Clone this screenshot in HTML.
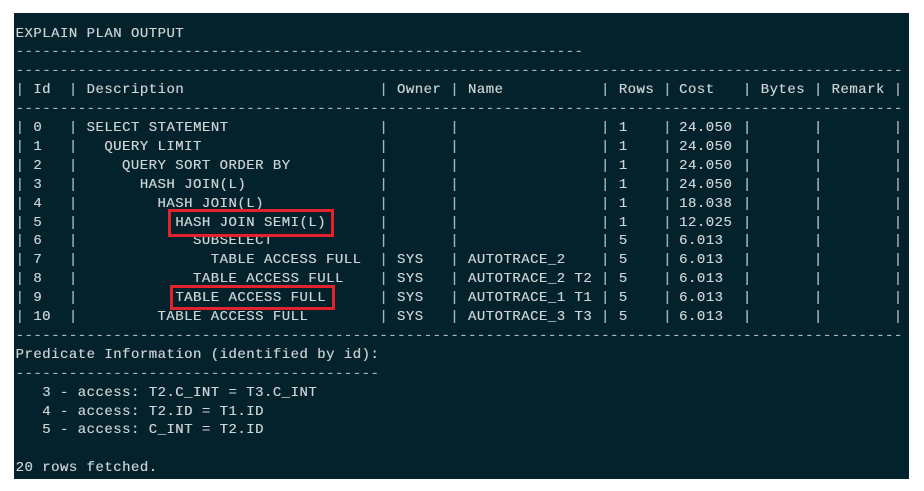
<!DOCTYPE html>
<html><head><meta charset="utf-8"><style>
html,body{margin:0;padding:0;background:#fff;width:924px;height:491px;overflow:hidden}
#p{position:absolute;left:14px;top:13px;width:895px;height:466px;background:#03222c}
.l{position:absolute;left:0;height:19px;line-height:19px;width:924px;font-family:"Liberation Mono",monospace;font-size:14px;letter-spacing:0.47px;color:#cdd4d5;white-space:pre;text-shadow:0.4px 0 0 rgba(205,212,213,0.6)}
.l span{position:absolute;top:0}
.c0{left:15.5px}.c2{left:33.2px}.c6{left:68.7px}.c8{left:86.5px}.c10{left:104.2px}.c12{left:121.9px}.c14{left:139.7px}.c16{left:157.4px}.c18{left:175.2px}.c20{left:192.9px}.c22{left:210.6px}
.c41{left:379.2px}.c43{left:396.9px}.c49{left:450.1px}.c51{left:467.9px}.c66{left:600.9px}.c68{left:618.7px}.c73{left:663px}.c75{left:679px}.c82{left:742.8px}.c84{left:760.6px}.c90{left:813.8px}.c92{left:831.5px}.c99{left:893.6px}
.b{color:#aab4b6}
.box{position:absolute;border:3px solid #e3222b;box-sizing:border-box}
</style></head><body>
<div id="p"></div>
<div class="l" style="top:24.5px"><span class="c0">EXPLAIN PLAN OUTPUT</span></div>
<div class="l" style="top:43.4px"><span class="c0 b">----------------------------------------------------------------</span></div>
<div class="l" style="top:62.3px"><span class="c0 b">----------------------------------------------------------------------------------------------------</span></div>
<div class="l" style="top:81.2px"><span class="c0 b">|</span><span class="c2">Id</span><span class="c6 b">|</span><span class="c8">Description</span><span class="c41 b">|</span><span class="c43">Owner</span><span class="c49 b">|</span><span class="c51">Name</span><span class="c66 b">|</span><span class="c68">Rows</span><span class="c73 b">|</span><span class="c75">Cost</span><span class="c82 b">|</span><span class="c84">Bytes</span><span class="c90 b">|</span><span class="c92">Remark</span><span class="c99 b">|</span></div>
<div class="l" style="top:100.1px"><span class="c0 b">----------------------------------------------------------------------------------------------------</span></div>

<div class="l" style="top:119px"><span class="c0 b">|</span><span class="c2">0</span><span class="c6 b">|</span><span class="c8">SELECT STATEMENT</span><span class="c41 b">|</span><span class="c49 b">|</span><span class="c66 b">|</span><span class="c68">1</span><span class="c73 b">|</span><span class="c75">24.050</span><span class="c82 b">|</span><span class="c90 b">|</span><span class="c99 b">|</span></div>
<div class="l" style="top:137.9px"><span class="c0 b">|</span><span class="c2">1</span><span class="c6 b">|</span><span class="c10">QUERY LIMIT</span><span class="c41 b">|</span><span class="c49 b">|</span><span class="c66 b">|</span><span class="c68">1</span><span class="c73 b">|</span><span class="c75">24.050</span><span class="c82 b">|</span><span class="c90 b">|</span><span class="c99 b">|</span></div>
<div class="l" style="top:156.8px"><span class="c0 b">|</span><span class="c2">2</span><span class="c6 b">|</span><span class="c12">QUERY SORT ORDER BY</span><span class="c41 b">|</span><span class="c49 b">|</span><span class="c66 b">|</span><span class="c68">1</span><span class="c73 b">|</span><span class="c75">24.050</span><span class="c82 b">|</span><span class="c90 b">|</span><span class="c99 b">|</span></div>
<div class="l" style="top:175.7px"><span class="c0 b">|</span><span class="c2">3</span><span class="c6 b">|</span><span class="c14">HASH JOIN(L)</span><span class="c41 b">|</span><span class="c49 b">|</span><span class="c66 b">|</span><span class="c68">1</span><span class="c73 b">|</span><span class="c75">24.050</span><span class="c82 b">|</span><span class="c90 b">|</span><span class="c99 b">|</span></div>
<div class="l" style="top:194.6px"><span class="c0 b">|</span><span class="c2">4</span><span class="c6 b">|</span><span class="c16">HASH JOIN(L)</span><span class="c41 b">|</span><span class="c49 b">|</span><span class="c66 b">|</span><span class="c68">1</span><span class="c73 b">|</span><span class="c75">18.038</span><span class="c82 b">|</span><span class="c90 b">|</span><span class="c99 b">|</span></div>
<div class="l" style="top:213.5px"><span class="c0 b">|</span><span class="c2">5</span><span class="c6 b">|</span><span class="c18">HASH JOIN SEMI(L)</span><span class="c41 b">|</span><span class="c49 b">|</span><span class="c66 b">|</span><span class="c68">1</span><span class="c73 b">|</span><span class="c75">12.025</span><span class="c82 b">|</span><span class="c90 b">|</span><span class="c99 b">|</span></div>
<div class="l" style="top:232.4px"><span class="c0 b">|</span><span class="c2">6</span><span class="c6 b">|</span><span class="c20">SUBSELECT</span><span class="c41 b">|</span><span class="c49 b">|</span><span class="c66 b">|</span><span class="c68">5</span><span class="c73 b">|</span><span class="c75">6.013</span><span class="c82 b">|</span><span class="c90 b">|</span><span class="c99 b">|</span></div>
<div class="l" style="top:251.3px"><span class="c0 b">|</span><span class="c2">7</span><span class="c6 b">|</span><span class="c22">TABLE ACCESS FULL</span><span class="c41 b">|</span><span class="c43">SYS</span><span class="c49 b">|</span><span class="c51">AUTOTRACE_2</span><span class="c66 b">|</span><span class="c68">5</span><span class="c73 b">|</span><span class="c75">6.013</span><span class="c82 b">|</span><span class="c90 b">|</span><span class="c99 b">|</span></div>
<div class="l" style="top:270.2px"><span class="c0 b">|</span><span class="c2">8</span><span class="c6 b">|</span><span class="c20">TABLE ACCESS FULL</span><span class="c41 b">|</span><span class="c43">SYS</span><span class="c49 b">|</span><span class="c51">AUTOTRACE_2 T2</span><span class="c66 b">|</span><span class="c68">5</span><span class="c73 b">|</span><span class="c75">6.013</span><span class="c82 b">|</span><span class="c90 b">|</span><span class="c99 b">|</span></div>
<div class="l" style="top:289.1px"><span class="c0 b">|</span><span class="c2">9</span><span class="c6 b">|</span><span class="c18">TABLE ACCESS FULL</span><span class="c41 b">|</span><span class="c43">SYS</span><span class="c49 b">|</span><span class="c51">AUTOTRACE_1 T1</span><span class="c66 b">|</span><span class="c68">5</span><span class="c73 b">|</span><span class="c75">6.013</span><span class="c82 b">|</span><span class="c90 b">|</span><span class="c99 b">|</span></div>
<div class="l" style="top:308px"><span class="c0 b">|</span><span class="c2">10</span><span class="c6 b">|</span><span class="c16">TABLE ACCESS FULL</span><span class="c41 b">|</span><span class="c43">SYS</span><span class="c49 b">|</span><span class="c51">AUTOTRACE_3 T3</span><span class="c66 b">|</span><span class="c68">5</span><span class="c73 b">|</span><span class="c75">6.013</span><span class="c82 b">|</span><span class="c90 b">|</span><span class="c99 b">|</span></div>

<div class="l" style="top:326.9px"><span class="c0 b">----------------------------------------------------------------------------------------------------</span></div>
<div class="l" style="top:345.8px"><span class="c0">Predicate Information (identified by id):</span></div>
<div class="l" style="top:364.7px"><span class="c0 b">-----------------------------------------</span></div>
<div class="l" style="top:383.6px"><span class="c0">   3 - access: T2.C_INT = T3.C_INT</span></div>
<div class="l" style="top:402.5px"><span class="c0">   4 - access: T2.ID = T1.ID</span></div>
<div class="l" style="top:421.4px"><span class="c0">   5 - access: C_INT = T2.ID</span></div>
<div class="l" style="top:459.2px"><span class="c0">20 rows fetched.</span></div>

<div class="box" style="left:168px;top:209px;width:166px;height:28px"></div>
<div class="box" style="left:170px;top:285px;width:165px;height:25px"></div>
</body></html>
